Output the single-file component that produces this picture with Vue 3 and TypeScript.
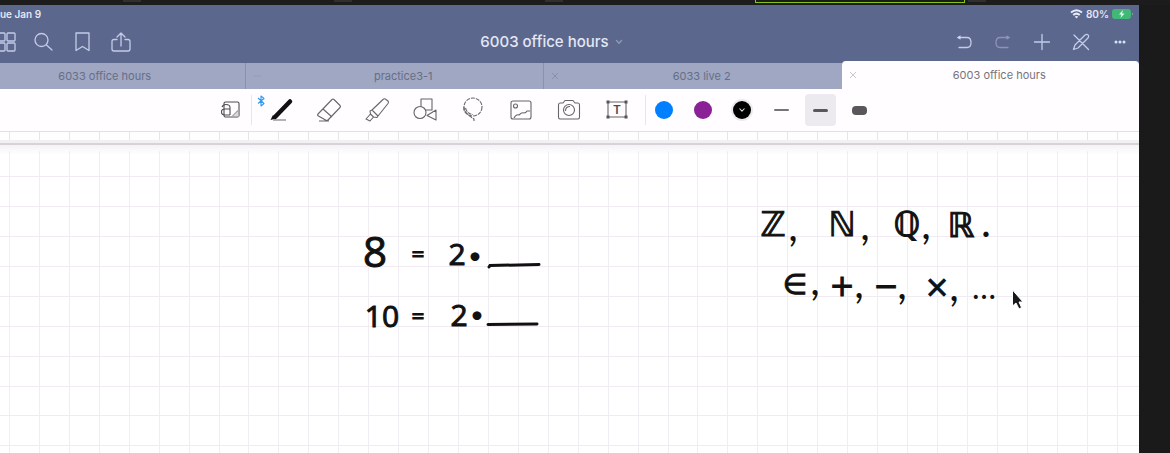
<script setup lang="ts">
import { ref } from 'vue'

interface Tab { id: number; title: string; close: 'none' | 'faint' | 'cross' }
interface Mark { t: string; x: number; y: number; k: string }

const tabs: Tab[] = [
  { id: 1, title: '6033 office hours', close: 'none' },
  { id: 2, title: 'practice3-1', close: 'faint' },
  { id: 3, title: '6033 live 2', close: 'cross' },
  { id: 4, title: '6003 office hours', close: 'cross' },
]
const active = ref(4)
const widthIndex = ref(1)

const columns = Array.from({ length: 100 }, (_, i) => 9 + Math.round((i * 898) / 30))
const rows = Array.from({ length: 60 }, (_, i) => 31 + Math.round((i * 898) / 30))

const equations: Mark[] = [
  { t: '8', x: 375, y: 122, k: 'tall' },
  { t: '=', x: 418, y: 117, k: 'sign' },
  { t: '2', x: 457, y: 120, k: 'digit' },
  { t: '•', x: 475, y: 119, k: 'dot' },
  { t: '10', x: 382, y: 182, k: 'digit' },
  { t: '=', x: 418, y: 179, k: 'sign' },
  { t: '2', x: 459, y: 181, k: 'digit' },
  { t: '•', x: 477, y: 178, k: 'dot' },
]
const symbols: Mark[] = [
  { t: 'ℤ', x: 773, y: 91, k: 'set' },
  { t: ',', x: 793, y: 96, k: 'comma' },
  { t: 'ℕ', x: 842, y: 91, k: 'set' },
  { t: ',', x: 865, y: 95, k: 'comma' },
  { t: 'ℚ', x: 907, y: 91, k: 'set' },
  { t: ',', x: 926, y: 94, k: 'comma' },
  { t: 'ℝ', x: 961, y: 92, k: 'set' },
  { t: '.', x: 986, y: 92, k: 'comma' },
  { t: '∈', x: 795, y: 149, k: 'element' },
  { t: ',', x: 815, y: 150, k: 'comma' },
  { t: '+', x: 842, y: 151, k: 'oper' },
  { t: ',', x: 859, y: 153, k: 'comma' },
  { t: '−', x: 886, y: 151, k: 'oper' },
  { t: ',', x: 902, y: 154, k: 'comma' },
  { t: '×', x: 937, y: 152, k: 'oper' },
  { t: ',', x: 954, y: 156, k: 'comma' },
  { t: '…', x: 984, y: 154, k: 'dots' },
]
</script>

<template>
  <div class="desktop">
    <div class="strip"><i class="nub"></i><i class="nub"></i><i class="nub"></i><i class="share"></i><i class="nub"></i></div>
    <div class="app">
      <header class="header">
        <div class="status">
          <span class="date">ue Jan 9</span>
          <span class="power">
            <svg width="13" height="10" viewBox="0 0 13 10" fill="none" stroke="#e6eafa" stroke-width="2"><path d="M1 3.6Q6.5-1 12 3.6M3.2 6Q6.5 3.2 9.8 6"/><path d="M6.5 9.5L4.7 7.6Q6.5 6.2 8.3 7.6Z" fill="#e6eafa" stroke="none"/></svg>
            <span>80%</span>
            <svg width="22" height="10" viewBox="0 0 22 10"><rect width="19" height="10" rx="3" fill="#41b878"/><path d="M11 1L7 5.5H9.5L8.500 9L12.500 4.500H10Z" fill="#eafff2"/><path d="M20 3.500Q22 5 20 6.500Z" fill="#7cab9f"/></svg>
          </span>
        </div>
        <nav class="nav">
          <div class="group left">
            <button aria-label="Overview"><svg width="20" height="20" viewBox="0 0 20 20"><rect x="1" y="1" width="8" height="8" rx="1"/><rect x="11" y="1" width="8" height="8" rx="1"/><rect x="1" y="11" width="8" height="8" rx="1"/><rect x="11" y="11" width="8" height="8" rx="1"/></svg></button>
            <button aria-label="Search"><svg width="20" height="20" viewBox="0 0 20 20"><circle cx="8.500" cy="8" r="6.500"/><path d="M13.500 13L19 18"/></svg></button>
            <button aria-label="Bookmark"><svg width="20" height="20" viewBox="0 0 20 20"><path d="M4 1H17V18.500L10.500 14.500L4 18.500Z"/></svg></button>
            <button aria-label="Share"><svg width="20" height="20" viewBox="0 0 20 20"><path d="M6 7.500H3Q1 7.500 1 9.500V17Q1 19 3 19H17Q19 19 19 17V9.500Q19 7.500 17 7.500H14M10 14V1M6 5L10 1L14 5"/></svg></button>
          </div>
          <button class="title">6003 office hours<svg width="8" height="6" viewBox="0 0 8 6"><path d="M1.500 1.500L4 4.200L6.500 1.500"/></svg></button>
          <div class="group right">
            <button aria-label="Undo"><svg width="18" height="18" viewBox="0 0 18 18"><path d="M3 4.500H12Q16 4.500 16 9.500Q16 14.500 12 14.500H4"/><path d="M5.500 2.200L2 4.500L5.500 6.800Z" fill="#cdd5ef" stroke="none"/></svg></button>
            <button aria-label="Redo" class="dim"><svg width="18" height="18" viewBox="0 0 18 18"><path d="M15 4.500H6Q2 4.500 2 9.500Q2 14.500 6 14.500H14"/><path d="M12.500 2.200L16 4.500L12.500 6.800Z" fill="#cdd5ef" stroke="none"/></svg></button>
            <button aria-label="Add"><svg width="18" height="18" viewBox="0 0 18 18"><path d="M1.500 9H16.500M9 1.500V16.500"/></svg></button>
            <button aria-label="Toggle editing"><svg width="18" height="18" viewBox="0 0 18 18"><path d="M2 2L16.500 16.500M1.500 16.500L3 12L13 2Q15.500 .5 16.500 2.500Q17 3.500 16 5L6 15Z"/></svg></button>
            <button aria-label="More"><svg width="18" height="18" viewBox="0 0 18 18"><g fill="#dce2f5" stroke="none"><circle cx="5" cy="9" r="1.500"/><circle cx="9" cy="9" r="1.500"/><circle cx="13" cy="9" r="1.500"/></g></svg></button>
          </div>
        </nav>
      </header>

      <div class="tabs" role="tablist">
        <div v-for="tab in tabs" :key="tab.id" class="tab" :class="{ active: tab.id === active }">
          <button class="close" :class="tab.close" :aria-label="'Close ' + tab.title"><svg width="8" height="8" viewBox="0 0 8 8"><path :d="tab.close === 'faint' ? 'M0 4H8' : 'M1 1L7 7M7 1L1 7'"/></svg></button>
          <button class="name" role="tab" :aria-selected="tab.id === active" @click="active = tab.id">{{ tab.title }}</button>
        </div>
      </div>

      <div class="toolbar">
        <button class="tool" aria-label="Zoom window"><svg width="24" height="24" viewBox="0 0 24 24"><rect x="6" y="4" width="15" height="15" rx="1.500" stroke="#4f4c51"/><path d="M20.500 12L14 18.500H20.500Z" fill="#dedbe0" stroke="#aaa7ad"/><path d="M4 9Q5 6.500 8 6.500Q12 6.500 12 9.500V17M12 11H7Q3.500 11 3.500 14T7 17H12" stroke="#4f4c51"/></svg></button>
        <i class="divider first"></i>
        <div class="tools">
          <button class="tool pen" aria-label="Pen"><svg width="28" height="24" viewBox="0 0 28 24"><path d="M22 3.500L7 19" stroke="#111" stroke-width="4.500" stroke-linecap="round"/><path d="M5 17L2.500 22L8 20.500Z" fill="#111" stroke="none"/><path d="M5 22H18" stroke="#777"/></svg><svg class="bluetooth" width="8" height="12" viewBox="0 0 8 12"><path d="M1 3L7 8.500L4 11V1L7 3.500L1 8.500" stroke="#3498ea"/></svg></button>
          <button class="tool" aria-label="Eraser"><svg width="26" height="26" viewBox="0 0 26 26"><path d="M2 17L16 2.500Q17 1.500 18 2.500L24 8.500Q25 9.500 24 10.500L12 23Q11 24 9.500 23L2.500 19Q1 18 2 17ZM7 12L16 20M3 24H13"/></svg></button>
          <button class="tool" aria-label="Highlighter"><svg width="26" height="26" viewBox="0 0 26 26"><path d="M8 13L19 2.500Q20.500 1 22 2.500L24 4Q25 5 24 6.500L14 19ZM8 13L6 14L6.500 17L9.500 20L13 20.500L14 19M6.500 17L2 22L6 24L9.500 20"/></svg></button>
          <button class="tool" aria-label="Shapes"><svg width="26" height="26" viewBox="0 0 26 26"><rect x="9" y="2" width="11" height="11"/><circle cx="8" cy="15.500" r="6" fill="#fffdff"/><path d="M24 13V23L15 18.500Z"/></svg></button>
          <button class="tool" aria-label="Lasso"><svg width="26" height="26" viewBox="0 0 26 26"><circle cx="13" cy="10" r="9" stroke-dasharray="4 1"/><path d="M4 10Q3 14 7 17T14 22V24M5.500 11Q7 17 13 17.500" stroke-dasharray="4 1"/></svg></button>
          <button class="tool" aria-label="Image"><svg width="26" height="26" viewBox="0 0 26 26"><rect x="3" y="4" width="20" height="18" rx="2"/><circle cx="7.500" cy="9" r="2"/><path d="M6 21Q8 17 11 18Q14 15 16 16Q18 16 19 14L22 14"/></svg></button>
          <button class="tool" aria-label="Camera"><svg width="26" height="26" viewBox="0 0 26 26"><path d="M4 6H7L9 3.500H17L19 6H22Q23.500 6 23.500 8V20Q23.500 22 22 22H4Q2.500 22 2.500 20V8Q2.500 6 4 6Z"/><circle cx="13" cy="13" r="5.500"/><path d="M9.500 14Q9.500 9.500 14 9.500"/></svg></button>
          <button class="tool" aria-label="Text"><svg width="26" height="26" viewBox="0 0 26 26"><rect x="4" y="5" width="18" height="15"/><g fill="#555" stroke="none"><rect x="2.500" y="3.500" width="3" height="3"/><rect x="20.500" y="3.500" width="3" height="3"/><rect x="2.500" y="18.500" width="3" height="3"/><rect x="20.500" y="18.500" width="3" height="3"/></g><text x="13" y="17">T</text></svg></button>
        </div>
        <i class="divider"></i>
        <div class="swatches">
          <button class="color blue" aria-label="Blue"></button>
          <button class="color purple" aria-label="Purple"></button>
          <button class="color black" aria-label="Black"><svg width="8" height="6" viewBox="0 0 8 6"><path d="M1.500 1.500L4 4.200L6.500 1.500" stroke="#ddd"/></svg></button>
        </div>
        <div class="widths">
          <button v-for="(w, i) in ['thin', 'medium', 'thick']" :key="w" :class="{ chosen: widthIndex === i }" :aria-label="w + ' stroke'" @click="widthIndex = i"><i :class="w"></i></button>
        </div>
      </div>

      <div class="previous"><svg width="100%" height="8"><path v-for="x in columns" :key="x" :d="`M${x + 0.5} 0V8`"/></svg></div>
      <main class="paper">
        <svg class="canvas" width="100%" height="100%">
          <g>
            <path v-for="x in columns" :key="x" class="down" :d="`M${x + 0.5} 6V1800`"/>
            <path v-for="y in rows" :key="y" class="across" :d="`M0 ${y + 0.5}H3000`"/>
          </g>
          <g class="ink">
            <text v-for="(m, i) in equations" :key="i" :class="m.k" :x="m.x" :y="m.y">{{ m.t }}</text>
            <path d="M489 122L490 120.500L539 119.500M488 179.500L537 179"/>
            <text v-for="(m, i) in symbols" :key="'s' + i" :class="m.k" :x="m.x" :y="m.y">{{ m.t }}</text>
          </g>
          <path class="pointer" d="M1012.500 145V161L1016 158L1019 164L1021.500 162.500L1019 157H1023Z"/>
        </svg>
      </main>
    </div>
  </div>
</template>

<style>
html, body, #app { height: 100%; margin: 0; }
body { background: #1a1a1a; }
</style>

<style scoped>
.desktop { min-height: 100vh; display: flex; flex-direction: column; background: #1a1a1a; font-family: Inter, "Liberation Sans", sans-serif; overflow: hidden; }
button { border: 0; padding: 0; background: none; font: inherit; color: inherit; display: grid; place-items: center; }
svg { display: block; fill: none; }
.strip { height: 5px; flex: none; display: flex; align-items: flex-start; background: #1c1c1c; padding-left: 123px; gap: 193px; }
.nub { width: 18px; height: 2px; background: #303030; }
.share { width: 208px; height: 2px; margin-left: -1px; border: 1px solid #86c61c; border-top: 0; flex: none; }
.share + .nub { margin-left: -190px; }
.app { flex: 1; display: flex; flex-direction: column; margin-right: 31px; background: #fffeff; overflow: hidden; }
.header { height: 58px; flex: none; background: #5c678d; color: #e3e7f5; }
.status { height: 18px; display: flex; justify-content: space-between; align-items: center; font-size: 10px; font-weight: 600; padding-right: 5px; }
.power { display: flex; align-items: center; gap: 3px; }
.nav { display: grid; grid-template-columns: 1fr auto 1fr; align-items: center; height: 38px; padding-right: 10px; }
.nav svg { stroke: #c3cce8; stroke-width: 1.3; stroke-linecap: round; stroke-linejoin: round; }
.group { display: flex; align-items: center; }
.left { gap: 19px; margin-left: -4px; }
.left button:first-child { margin-right: -2px; }
.right { justify-content: flex-end; gap: 21px; }
.dim { opacity: .45; }
.title { display: flex; align-items: center; gap: 6px; font-size: 15px; font-weight: 500; line-height: 20px; white-space: nowrap; margin-left: -26px; }
.title svg { opacity: .5; }
.tabs { height: 26px; flex: none; display: flex; background: #5c678d; margin-left: -54px; }
.tab { flex: 1; display: flex; align-items: center; background: #9fa7c2; color: #666e87; font-size: 11px; border-left: 1px solid #8791b0; }
.tab.active { background: #fffdff; color: #77747b; margin-top: -2px; border-left: 0; border-radius: 4px 4px 0 0; }
.close { width: 22px; height: 20px; flex: none; }
.close svg { stroke: #8490b1; }
.active .close svg { stroke: #ccc8cc; }
.close.none { visibility: hidden; }
.close.faint svg { opacity: .4; }
.name { flex: 1; line-height: 20px; text-align: center; display: block; padding-right: 4px; }
.toolbar { height: 42px; flex: none; display: flex; align-items: center; background: #fffdff; border-bottom: 1px solid #e3e0e4; padding-left: 217px; }
.toolbar svg { stroke: #68656a; stroke-width: 1.1; stroke-linejoin: round; }
.divider { width: 1px; height: 30px; background: #e9e6eb; margin-left: 15px; }
.divider.first { margin-left: 8px; }
.tools { display: flex; align-items: center; gap: 22px; margin-left: 16px; }
.tool { width: 26px; height: 26px; }
.pen { position: relative; }
.bluetooth { position: absolute; left: -11px; top: -2px; }
.tools text { font: 600 12px Inter, sans-serif; fill: #4f4c51; stroke: none; text-anchor: middle; }
.swatches { display: flex; gap: 21px; margin-left: 9px; }
.color { width: 18px; height: 18px; border-radius: 50%; }
.blue { background: #007fff; }
.purple { background: #8b2196; }
.black { background: #000; box-shadow: 0 0 0 2px #eeeaec; }
.widths { display: flex; margin-left: 15px; gap: 8px; }
.widths button { width: 31px; height: 32px; border-radius: 4px; }
.widths .chosen { background: #edeaef; }
.widths i { width: 15px; background: #5a565b; border-radius: 4px; }
.widths .thin { height: 2px; background: #777378; }
.widths .medium { height: 3px; }
.widths .thick { height: 9px; }
.toolbar > * { position: relative; }
.previous { height: 11px; flex: none; background: linear-gradient(#fffeff 8px, #f2f0f3 8px); border-bottom: 2px solid #d7d3d8; }
.previous svg { stroke: #e8e5e9; }
.paper { flex: 1; position: relative; min-height: 300px; background: linear-gradient(#f5f2f6, #fff 10px); }
.canvas { position: absolute; inset: 0; }
.down { stroke: #f0edf3; stroke-width: 1; }
.across { stroke: #f1eaf2; stroke-width: 1; }
.ink { fill: #111; font-family: Lato, "DejaVu Sans", sans-serif; }
.ink text { text-anchor: middle; }
.ink path { stroke: #111; stroke-width: 3; stroke-linecap: round; fill: none; }
.ink .tall { font-size: 42px; stroke: #111; stroke-width: 1px; font-family: "Open Sans", sans-serif; }
.ink .digit { font-size: 30px; stroke: #111; stroke-width: 1px; font-family: "Open Sans", sans-serif; }
.ink .sign { font-size: 24px; stroke: #111; stroke-width: 1px; }
.ink .dot { font-size: 24px; }
.ink .set { font-size: 34px; font-family: "DejaVu Sans", sans-serif; stroke: #111; stroke-width: 1px; }
.ink .oper { font-size: 30px; font-family: "DejaVu Sans", sans-serif; stroke: #111; stroke-width: 1px; }
.ink .element { font-size: 28px; font-family: "DejaVu Sans", sans-serif; stroke: #111; stroke-width: 1px; }
.ink .comma { font-size: 42px; }
.ink .dots { font-size: 32px; }
.pointer { fill: #18181b; stroke: #fff; stroke-width: 1; }
</style>
